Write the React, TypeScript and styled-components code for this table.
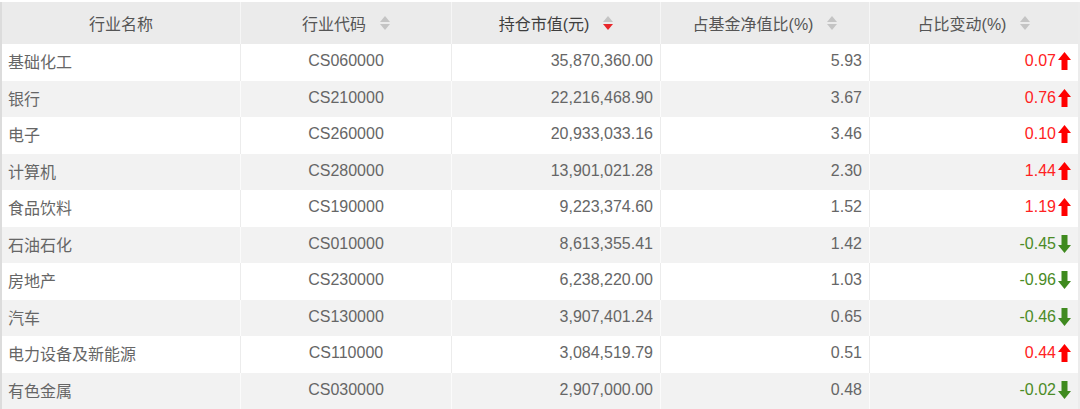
import React from "react";
import styled, { createGlobalStyle } from "styled-components";

const Global = createGlobalStyle`
  html, body { margin: 0; padding: 0; background: #fff; }
  body { font-family: "Liberation Sans", "Noto Sans CJK SC", Arial, sans-serif; }
`;

const Table = styled.div`
  width: 1076px;
  height: 407px;
  margin-top: 2px;
  border-left: 2px solid #dcdcdc;
  border-right: 2px solid #ececec;
  display: flex;
  flex-direction: column;
`;

const COLS = "238px 211px 209px 209px 209px";

const HeaderRow = styled.div`
  display: grid;
  grid-template-columns: ${COLS};
  height: 42px;
  background: #ebebeb;
`;

const HeadCell = styled.div<{ $first?: boolean; $active?: boolean }>`
  display: flex;
  align-items: center;
  justify-content: center;
  gap: 14px;
  font-size: 16px;
  color: ${(p) => (p.$active ? "#3e3e3e" : "#555")};
  border-left: ${(p) => (p.$first ? "none" : "1px solid #f6f6f6")};
  font-family: "Liberation Sans", "Noto Sans CJK SC", sans-serif;
`;

const Row = styled.div<{ $alt: boolean }>`
  display: grid;
  grid-template-columns: ${COLS};
  height: 36.5px;
  background: ${(p) => (p.$alt ? "#f2f2f2" : "#ffffff")};
`;

const Cell = styled.div<{ $align: "left" | "center" | "right"; $first?: boolean; $alt?: boolean }>`
  display: flex;
  align-items: center;
  justify-content: ${(p) =>
    p.$align === "left" ? "flex-start" : p.$align === "center" ? "center" : "flex-end"};
  padding: ${(p) => (p.$align === "left" ? "0 0 2px 6px" : p.$align === "right" ? "0 7px 2px 0" : "0 0 2px 0")};
  font-size: 16px;
  color: #666;
  border-left: ${(p) => (p.$first ? "none" : p.$alt ? "1px solid #fbfbfb" : "1px solid #ececec")};
`;

const NameText = styled.span`
  font-size: 16px;
  font-family: "Noto Sans CJK SC", sans-serif;
  color: #666;
`;

const Change = styled.span<{ $up: boolean }>`
  display: inline-flex;
  align-items: center;
  gap: 2px;
  color: ${(p) => (p.$up ? "#f22" : "#4b8b26")};
`;

const SortWrap = styled.span`
  display: inline-flex;
  flex-direction: column;
  gap: 2px;
`;

const SortIcon = ({ active }: { active?: boolean }) => (
  <SortWrap>
    <svg width="10" height="6" viewBox="0 0 10 6">
      <polygon points="5,0 10,6 0,6" fill="#c4c4c4" />
    </svg>
    <svg width="10" height="6" viewBox="0 0 10 6">
      <polygon points="0,0 10,0 5,6" fill={active ? "#e8262a" : "#c4c4c4"} />
    </svg>
  </SortWrap>
);

const Arrow = ({ up }: { up: boolean }) => (
  <svg width="13" height="18" viewBox="0 0 13 18">
    {up ? (
      <polygon points="6.5,0 13,8 9.5,8 9.5,18 3.5,18 3.5,8 0,8" fill="#f00" />
    ) : (
      <polygon points="3.5,0 9.5,0 9.5,10 13,10 6.5,18 0,10 3.5,10" fill="#3f8a1f" />
    )}
  </svg>
);

const data = [
  ["基础化工", "CS060000", "35,870,360.00", "5.93", "0.07"],
  ["银行", "CS210000", "22,216,468.90", "3.67", "0.76"],
  ["电子", "CS260000", "20,933,033.16", "3.46", "0.10"],
  ["计算机", "CS280000", "13,901,021.28", "2.30", "1.44"],
  ["食品饮料", "CS190000", "9,223,374.60", "1.52", "1.19"],
  ["石油石化", "CS010000", "8,613,355.41", "1.42", "-0.45"],
  ["房地产", "CS230000", "6,238,220.00", "1.03", "-0.96"],
  ["汽车", "CS130000", "3,907,401.24", "0.65", "-0.46"],
  ["电力设备及新能源", "CS110000", "3,084,519.79", "0.51", "0.44"],
  ["有色金属", "CS030000", "2,907,000.00", "0.48", "-0.02"],
];

export default function App() {
  return (
    <>
      <Global />
      <Table>
        <HeaderRow>
          <HeadCell $first>行业名称</HeadCell>
          <HeadCell>
            行业代码
            <SortIcon />
          </HeadCell>
          <HeadCell $active>
            持仓市值(元)
            <SortIcon active />
          </HeadCell>
          <HeadCell>
            占基金净值比(%)
            <SortIcon />
          </HeadCell>
          <HeadCell>
            占比变动(%)
            <SortIcon />
          </HeadCell>
        </HeaderRow>
        {data.map((r, i) => {
          const alt = i % 2 === 1;
          const up = !r[4].startsWith("-");
          return (
            <Row key={r[1]} $alt={alt}>
              <Cell $align="left" $first $alt={alt}>
                <NameText>{r[0]}</NameText>
              </Cell>
              <Cell $align="center" $alt={alt}>{r[1]}</Cell>
              <Cell $align="right" $alt={alt}>{r[2]}</Cell>
              <Cell $align="right" $alt={alt}>{r[3]}</Cell>
              <Cell $align="right" $alt={alt}>
                <Change $up={up}>
                  {r[4]}
                  <Arrow up={up} />
                </Change>
              </Cell>
            </Row>
          );
        })}
      </Table>
    </>
  );
}
